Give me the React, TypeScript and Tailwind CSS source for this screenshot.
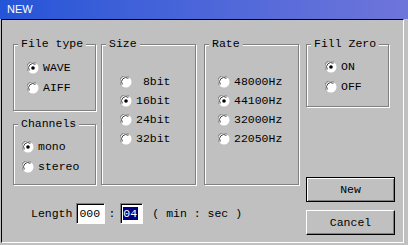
import React from 'react';

const Radio = ({ checked }: { checked?: boolean }) => (
  <svg width="12" height="12" viewBox="0 0 12 12" className="shrink-0">
    <circle cx="6" cy="6" r="5.5" fill="#fff" />
    <path d="M1.4 9.2 A5.3 5.3 0 0 1 9.2 1.4" stroke="#808080" strokeWidth="1" fill="none" />
    <path d="M2.4 8.4 A4.3 4.3 0 0 1 8.4 2.4" stroke="#404040" strokeWidth="1" fill="none" />
    {checked && <circle cx="6" cy="6" r="1.8" fill="#000" />}
  </svg>
);

const Group = ({ label, className, children }: { label: string; className: string; children?: React.ReactNode }) => (
  <div className={`relative border border-[#808080] shadow-[inset_1px_1px_0_#fff,1px_1px_0_#fff] ${className}`}>
    <span className="absolute left-[4px] -top-[8px] bg-[#c0c0c0] px-[3px] leading-[14px] whitespace-pre">{label}</span>
    {children}
  </div>
);

const Option = ({ label, checked, h = 'h-[20px]' }: { label: string; checked?: boolean; h?: string }) => (
  <div className={`flex items-center gap-[4px] ${h}`}>
    <Radio checked={checked} />
    <span className="whitespace-pre leading-none">{label}</span>
  </div>
);

export default function App() {
  return (
    <div className="w-[408px] h-[245px] bg-[#c0c0c0] flex flex-col overflow-hidden text-black text-[11.5px] font-['Liberation_Mono','Courier_New',monospace]">
      <div className="h-[19px] shrink-0 bg-linear-to-r from-[#2355d8] to-[#6e75da] text-white pl-[7px] flex items-center text-[11px] font-['Liberation_Sans',Arial,sans-serif]">
        NEW
      </div>
      <div className="flex-1 ml-[1px] mr-[4px] mb-[2px] border border-black border-r-white border-b-white flex pl-[11px] pt-[24px]">
        <div className="flex flex-col">
          <div className="flex items-start">
            <div className="w-[83px] flex flex-col">
              <Group label="File type" className="h-[67px] pt-[13px] pl-[13px]">
                <Option label="WAVE" checked />
                <Option label="AIFF" />
              </Group>
              <Group label="Channels" className="mt-[13px] h-[61px] pt-[12px] pl-[8px]">
                <Option label="mono" checked />
                <Option label="stereo" />
              </Group>
            </div>
            <Group label="Size" className="ml-[5px] w-[95px] h-[141px] pt-[27px] pl-[18px]">
              <Option label=" 8bit" h="h-[19px]" />
              <Option label="16bit" h="h-[19px]" checked />
              <Option label="24bit" h="h-[19px]" />
              <Option label="32bit" h="h-[19px]" />
            </Group>
            <Group label="Rate" className="ml-[8px] w-[95px] h-[141px] pt-[27px] pl-[13px]">
              <Option label="48000Hz" h="h-[19px]" />
              <Option label="44100Hz" h="h-[19px]" checked />
              <Option label="32000Hz" h="h-[19px]" />
              <Option label="22050Hz" h="h-[19px]" />
            </Group>
          </div>
          <div className="mt-[18px] pl-[18px] flex items-center h-[21px]">
            <span>Length</span>
            <div className="ml-[4px] w-[29px] h-[21px] bg-white border border-[#808080] border-r-white border-b-white shadow-[inset_1px_1px_0_#000] flex items-center pl-[2px]">
              000
            </div>
            <span className="ml-[3px]">:</span>
            <div className="ml-[5px] w-[23px] h-[21px] bg-white border border-[#808080] border-r-white border-b-white shadow-[inset_1px_1px_0_#000] flex items-center pl-[2px]">
              <span className="bg-[#000080] text-white leading-[13px]">04</span>
              <span className="w-[1px] h-[13px] bg-black" />
            </div>
            <span className="ml-[9px] whitespace-pre">( min : sec )</span>
          </div>
        </div>
        <div className="ml-[7px] w-[89px] flex flex-col">
          <Group label="Fill Zero" className="w-[83px] h-[63px] pt-[12px] pl-[18px]">
            <Option label="ON" checked />
            <Option label="OFF" />
          </Group>
          <button className="mt-[70px] h-[25px] w-full border border-black shadow-[inset_1px_1px_0_#fff,inset_-1px_-1px_0_#808080] flex items-center justify-center">
            New
          </button>
          <button className="mt-[8px] h-[25px] w-full border border-white border-r-black border-b-black shadow-[inset_-1px_-1px_0_#808080] flex items-center justify-center">
            Cancel
          </button>
        </div>
      </div>
    </div>
  );
}
